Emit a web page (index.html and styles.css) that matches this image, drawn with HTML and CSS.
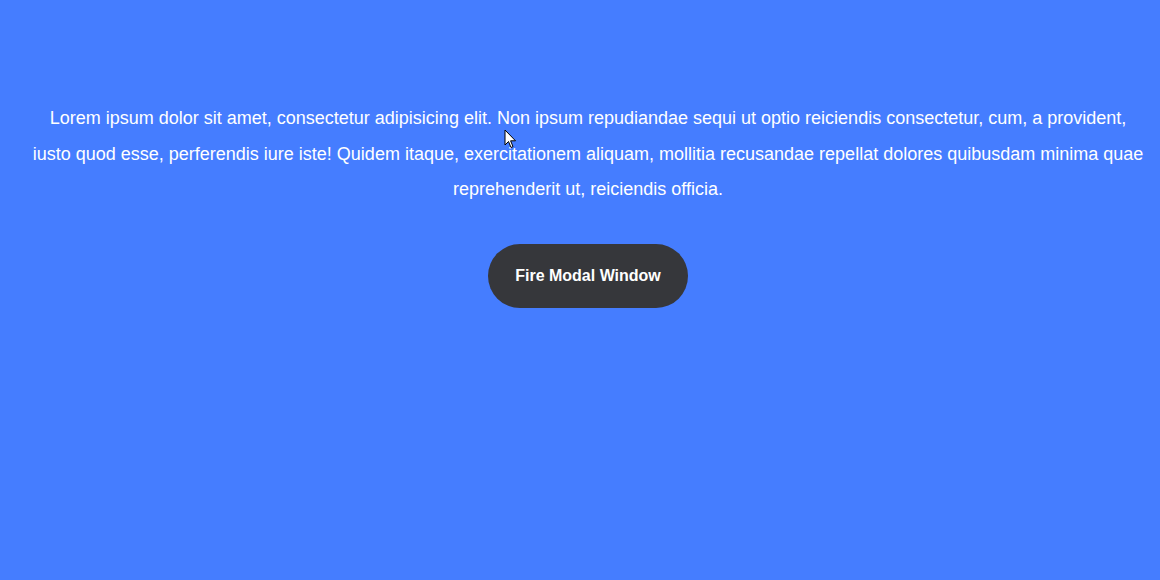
FILE: index.html
```html
<!DOCTYPE html>
<html lang="en">
<head>
<meta charset="utf-8">
<title>Modal</title>
<link rel="stylesheet" href="styles.css">
</head>
<body>
<main class="page">
  <p class="intro">Lorem ipsum dolor sit amet, consectetur adipisicing elit. Non ipsum repudiandae sequi ut optio reiciendis consectetur, cum, a provident, iusto quod esse, perferendis iure iste! Quidem itaque, exercitationem aliquam, mollitia recusandae repellat dolores quibusdam minima quae reprehenderit ut, reiciendis officia.</p>
  <button class="fire-btn" type="button">Fire Modal Window</button>
</main>
<svg class="cursor" width="14" height="22" viewBox="0 0 14 22"><path d="M1 1 L1 16 L4.5 12.5 L7 18.5 L9 17.6 L6.6 11.8 L11.5 11.8 Z" fill="#fff" stroke="#000" stroke-width="1"/></svg>
</body>
</html>
```
FILE: styles.css
```css
html, body {
  margin: 0;
  padding: 0;
  height: 100%;
}
body {
  background: #457dff;
  font-family: "Liberation Sans", Arial, sans-serif;
  color: #fff;
  overflow: hidden;
}
.page {
  display: flex;
  flex-direction: column;
  align-items: center;
  padding: 101px 15px 0 31px;
}
.intro {
  margin: 0;
  font-size: 18px;
  line-height: 35.5px;
  text-align: center;
}
.fire-btn {
  margin-top: 36px;
  width: 200px;
  height: 64px;
  border: none;
  border-radius: 32px;
  background: #36373b;
  color: #fff;
  font-family: "Liberation Sans", Arial, sans-serif;
  font-weight: bold;
  font-size: 16px;
  cursor: pointer;
}
.cursor {
  position: absolute;
  left: 504px;
  top: 129px;
}
```
